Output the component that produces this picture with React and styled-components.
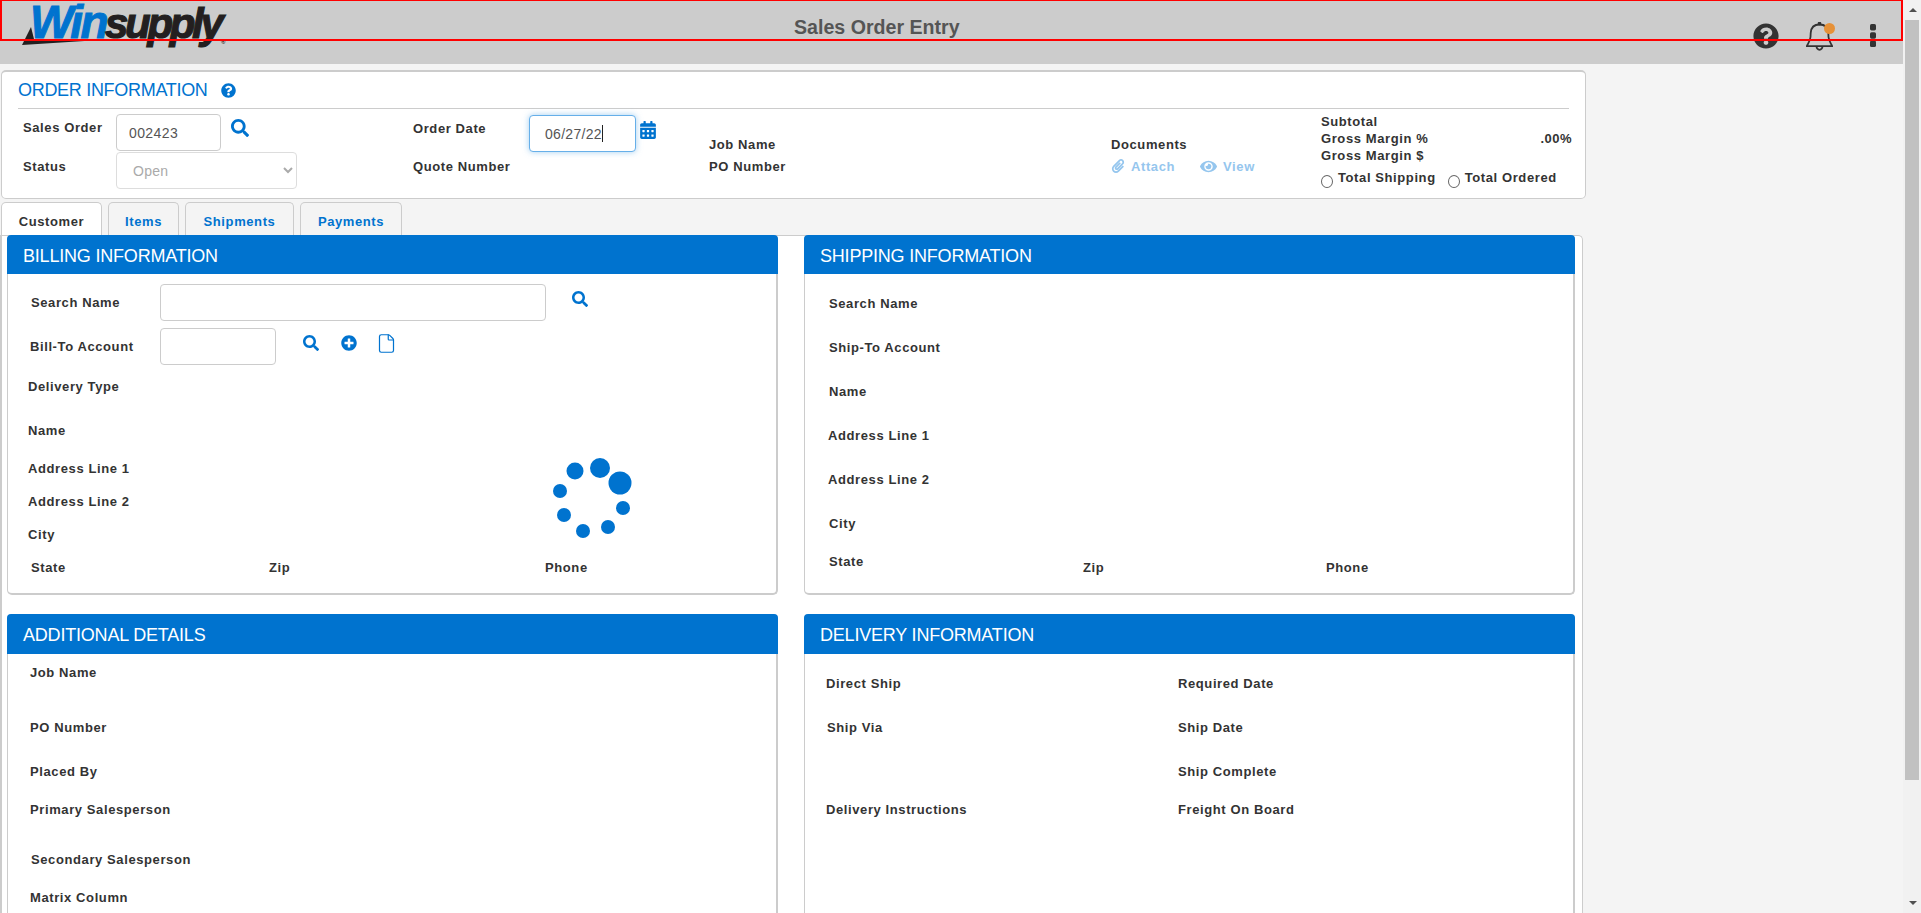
import React from "react";
import styled, { createGlobalStyle } from "styled-components";
import {
  FaQuestionCircle,
  FaSearch,
  FaCalendarAlt,
  FaPlusCircle,
  FaPaperclip,
  FaEye,
} from "react-icons/fa";
import { File } from "lucide-react";

const BLUE = "#0073cf";

const GlobalStyle = createGlobalStyle`
  html, body {
    margin: 0;
    height: 100%;
    overflow: hidden;
    background: #f4f4f4;
    font-family: "Liberation Sans", Arial, sans-serif;
  }
  * { box-sizing: border-box; }
`;

const Page = styled.div`
  display: flex;
  height: 913px;
  overflow: hidden;
`;

const Main = styled.div`
  position: relative;
  flex: 1;
  min-width: 0;
  height: 913px;
  overflow: hidden;
`;

const Scrollbar = styled.div`
  width: 18px;
  background: #f1f1f1;
  display: flex;
  flex-direction: column;
  align-items: center;
  justify-content: space-between;
  position: relative;
  padding: 0 0 8px 1px;
`;

const ArrowUp = styled.div`
  margin-top: 8px;
  width: 0;
  height: 0;
  border-left: 4px solid transparent;
  border-right: 4px solid transparent;
  border-bottom: 4px solid #505050;
`;

const ArrowDown = styled.div`
  width: 0;
  height: 0;
  border-left: 4px solid transparent;
  border-right: 4px solid transparent;
  border-top: 4px solid #505050;
`;

const Thumb = styled.div`
  position: absolute;
  top: 20px;
  left: 2px;
  width: 14px;
  height: 760px;
  background: #c1c1c1;
`;

const Header = styled.header`
  height: 64px;
  background: #ccc;
  display: flex;
  align-items: flex-start;
  position: relative;
`;

const RedFrame = styled.div`
  position: absolute;
  top: 0;
  left: 0;
  right: 0;
  height: 41px;
  border: 2px solid #f00;
  border-top-width: 1px;
  pointer-events: none;
`;

const Logo = styled.div`
  position: relative;
  flex: none;
  width: 225px;
  margin-left: 22px;
  height: 50px;
  font-family: "Liberation Sans", Arial, sans-serif;
  font-style: italic;
  font-weight: 700;
  white-space: nowrap;
`;

const LogoWin = styled.span`
  position: absolute;
  left: 8px;
  top: 2px;
  font-size: 46px;
  line-height: 40px;
  letter-spacing: -2.7px;
  color: ${BLUE};
  -webkit-text-stroke: 1px ${BLUE};
`;

const LogoSupply = styled.span`
  position: absolute;
  left: 83px;
  top: 4px;
  font-size: 42px;
  line-height: 40px;
  letter-spacing: -3.3px;
  color: #231f20;
  -webkit-text-stroke: 1.2px #231f20;
`;

const LogoMark = styled.span`
  position: absolute;
  left: 199px;
  top: 39px;
  font-size: 6px;
  line-height: 6px;
  font-style: normal;
  color: #231f20;
`;

const Swoosh = styled.svg`
  position: absolute;
  left: 0;
  top: 24px;
`;

const PageTitle = styled.h1`
  margin: 17px 0 0 547px;
  font-size: 19.6px;
  line-height: 20px;
  font-weight: 700;
  color: #555;
  white-space: nowrap;
`;

const HeaderIcons = styled.div`
  position: absolute;
  right: 0;
  top: 0;
  height: 64px;
`;

const HelpIcon = styled(FaQuestionCircle)`
  position: absolute;
  right: 124px;
  top: 23px;
  font-size: 26px;
  color: #333;
`;

const Bell = styled.svg`
  position: absolute;
  right: 70px;
  top: 22px;
`;

const BellDot = styled.span`
  position: absolute;
  right: 68px;
  top: 23px;
  width: 11px;
  height: 11px;
  border-radius: 50%;
  background: #e69138;
`;

const More = styled.svg`
  position: absolute;
  right: 27px;
  top: 24px;
`;

const OrderPanel = styled.section`
  margin: 6px 0 0 1px;
  width: 1585px;
  height: 129px;
  background: #fff;
  border: 1px solid #ccc;
  border-top-width: 2px;
  border-radius: 5px;
  padding: 0 16px;
  position: relative;
`;

const OrderHead = styled.div`
  height: 37px;
  border-bottom: 1px solid #ccc;
  display: flex;
  align-items: center;
  gap: 13px;
`;

const OrderTitle = styled.h2`
  margin: 0;
  font-size: 18px;
  font-weight: 400;
  letter-spacing: -0.3px;
  color: ${BLUE};
`;

const OrderBody = styled.div`
  display: grid;
  grid-template-columns: 390px 296px 402px 210px 1fr;
  height: 88px;
  margin: 0 -3px 0 5px;
`;

const OrderCol = styled.div`
  display: flex;
  flex-direction: column;
  padding-top: ${(p) => p.$top || 0}px;
`;

const Inline = styled.div`
  display: flex;
  align-items: center;
  height: ${(p) => p.$h}px;
  margin-top: ${(p) => p.$mt || 0}px;
  gap: ${(p) => p.$gap || 0}px;
`;

const Label = styled.label`
  display: block;
  flex: none;
  width: ${(p) => (p.$w ? `${p.$w}px` : "auto")};
  margin-left: ${(p) => p.$x || 0}px;
  /* items are centred in their row, so a margin moves them by half its size */
  margin-top: ${(p) => Math.max(p.$shift || 0, 0) * 2}px;
  margin-bottom: ${(p) => Math.max(-(p.$shift || 0), 0) * 2}px;
  font-size: 13px;
  font-weight: 700;
  letter-spacing: 0.6px;
  color: #333;
  white-space: nowrap;
`;

const Input = styled.input`
  width: ${(p) => p.$w}px;
  height: 37px;
  padding: 0 12px;
  background: #fff;
  border: 1px solid #ccc;
  border-radius: 4px;
  font: 14px "Liberation Sans", Arial, sans-serif;
  letter-spacing: 0.4px;
  color: #555;
  outline: none;
`;

const DateBox = styled.div`
  width: 107px;
  height: 37px;
  padding: 0 15px;
  display: flex;
  align-items: center;
  background: #fff;
  border: 1px solid #66afe9;
  border-radius: 4px;
  box-shadow: 0 0 6px rgba(102, 175, 233, 0.6);
  font-size: 14px;
  letter-spacing: 0.3px;
  color: #555;
`;

const Caret = styled.span`
  display: inline-block;
  width: 1px;
  height: 17px;
  background: #222;
`;

const StatusSelect = styled.select`
  width: 181px;
  height: 37px;
  padding: 0 12px;
  background: #fff;
  border: 1px solid #ddd;
  border-radius: 4px;
  font: 14px "Liberation Sans", Arial, sans-serif;
  letter-spacing: 0.3px;
  color: #aaa;
  opacity: 1;
`;

const BlueSearch = styled(FaSearch)`
  flex: none;
  font-size: ${(p) => p.$size || 16}px;
  color: ${BLUE};
  margin-left: ${(p) => p.$ml || 0}px;
  margin-top: ${(p) => p.$mt || 0}px;
`;

const Calendar = styled(FaCalendarAlt)`
  flex: none;
  font-size: 18px;
  color: ${BLUE};
  margin: -8px 0 0 3px;
`;

const DocLink = styled.span`
  display: inline-flex;
  align-items: center;
  gap: 6px;
  font-size: 13px;
  font-weight: 700;
  letter-spacing: 0.6px;
  color: #95c6ee;
`;

const SummaryRow = styled.div`
  display: flex;
  justify-content: space-between;
  height: ${(p) => p.$h}px;
  align-items: center;
`;

const SummaryValue = styled.span`
  font-size: 13px;
  font-weight: 700;
  letter-spacing: 0.45px;
  color: #333;
`;

const RadioRow = styled.div`
  display: flex;
  align-items: flex-start;
  margin-top: 6px;
`;

const Radio = styled.span`
  flex: none;
  width: 12px;
  height: 13px;
  margin: 5px 5px 0 0;
  background: #fff;
  border: 1px solid #666;
  border-radius: 50%;
`;

const RadioLabel = styled(Label)`
  margin-right: 12px;
`;

const TabBar = styled.nav`
  display: flex;
  gap: 6px;
  margin: 3px 0 0 1px;
  height: 33px;
`;

const Tab = styled.div`
  width: ${(p) => p.$w}px;
  display: flex;
  align-items: center;
  justify-content: center;
  padding-top: 5px;
  background: ${(p) => (p.$active ? "#fff" : "#f4f4f4")};
  border: 1px solid #ccc;
  border-bottom: 0;
  border-radius: 5px 5px 0 0;
  font-size: 13px;
  font-weight: 700;
  letter-spacing: 0.6px;
  color: ${(p) => (p.$active ? "#333" : BLUE)};
`;

const TabBody = styled.div`
  width: 1583px;
  height: 700px;
  background: #fff;
  border: 1px solid #ccc;
  border-left-width: 2px;
  border-bottom: 0;
  border-radius: 0 5px 0 0;
  padding: 0 0 0 5px;
`;

const PanelGrid = styled.div`
  display: grid;
  grid-template-columns: 771px 771px;
  column-gap: 26px;
  row-gap: 19px;
  margin-top: -1px;
`;

const Panel = styled.section`
  position: relative;
  height: ${(p) => p.$h}px;
  background: #fff;
  border: 1px solid #ccc;
  border-width: 0 2px 2px 1px;
  border-radius: 5px;
`;

const PanelHead = styled.h3`
  margin: 0 -2px 0 -1px;
  height: ${(p) => p.$h}px;
  padding: 3px 16px 0;
  display: flex;
  align-items: center;
  background: ${BLUE};
  border-radius: 4px 4px 0 0;
  font-size: 18px;
  font-weight: 400;
  letter-spacing: -0.2px;
  color: #fff;
`;

const PanelBody = styled.div`
  padding-top: ${(p) => p.$top || 0}px;
`;

const Columns = styled.div`
  display: grid;
  grid-template-columns: ${(p) => p.$cols};
`;

const Row = ({ h = 24, mt = 0, x, label, w, children }) => (
  <Inline $h={h} $mt={mt}>
    <Label $x={x} $w={w}>
      {label}
    </Label>
    {children}
  </Inline>
);

const PlusIcon = styled(FaPlusCircle)`
  flex: none;
  font-size: 16px;
  color: ${BLUE};
  margin: -7px 0 0 22px;
`;

const FileIcon = styled(File)`
  flex: none;
  color: ${BLUE};
  margin: -7px 0 0 19px;
`;

const Spinner = styled.svg`
  position: absolute;
  left: 532px;
  top: 215px;
`;

const DOTS = [
  [60, 18, 10],
  [80, 33, 11.5],
  [35, 21, 8.5],
  [20, 41, 7],
  [24, 65, 7],
  [43, 81, 7],
  [68, 77, 7],
  [83, 58, 7],
];

export default function App() {
  return (
    <Page>
      <GlobalStyle />
      <Main>
        <Header>
          <Logo>
            <Swoosh width="100" height="26" viewBox="0 0 100 26">
              <path d="M9 3 L0 21 L78 16 L12 15 Z" fill="#231f20" />
            </Swoosh>
            <LogoWin>Win</LogoWin>
            <LogoSupply>supply</LogoSupply>
            <LogoMark>®</LogoMark>
          </Logo>
          <PageTitle>Sales Order Entry</PageTitle>
          <HeaderIcons>
            <HelpIcon />
            <Bell width="27" height="29" viewBox="0 0 27 29" fill="none" stroke="#333" strokeWidth="1.8">
              <circle cx="13.5" cy="1.6" r="1" fill="#333" />
              <path d="M13.5 2.5 C8 2.5 5 6 4.7 11 L4.5 15 C4.2 19 2 21.5 .8 24.2 H26.2 C25 21.5 22.8 19 22.5 15 L22.3 11 C22 6 19 2.5 13.5 2.5 Z" />
              <path d="M10.5 24.2 a3 3.6 0 0 0 6 0" />
            </Bell>
            <BellDot />
            <More width="6" height="23" viewBox="0 0 6 23" fill="#333">
              <rect width="6" height="6.4" rx="1.6" />
              <rect y="8.3" width="6" height="6.4" rx="1.6" />
              <rect y="16.6" width="6" height="6.4" rx="1.6" />
            </More>
          </HeaderIcons>
        </Header>
        <RedFrame />

        <OrderPanel>
          <OrderHead>
            <OrderTitle>ORDER INFORMATION</OrderTitle>
            <FaQuestionCircle size={15} color={BLUE} />
          </OrderHead>
          <OrderBody>
            <OrderCol $top={5}>
              <Inline $h={37}>
                <Label $w={93} $shift={-5}>
                  Sales Order
                </Label>
                <Input defaultValue="002423" $w={105} />
                <BlueSearch $ml={10} $mt={-10} $size={18} />
              </Inline>
              <Inline $h={37} $mt={1}>
                <Label $w={93} $shift={-4}>
                  Status
                </Label>
                <StatusSelect disabled defaultValue="Open">
                  <option>Open</option>
                </StatusSelect>
              </Inline>
            </OrderCol>
            <OrderCol $top={6}>
              <Inline $h={37}>
                <Label $w={116} $shift={-5}>
                  Order Date
                </Label>
                <DateBox>
                  06/27/22
                  <Caret />
                </DateBox>
                <Calendar />
              </Inline>
              <Inline $h={27} $mt={4}>
                <Label $shift={-3}>Quote Number</Label>
              </Inline>
            </OrderCol>
            <OrderCol $top={24}>
              <Inline $h={22}>
                <Label>Job Name</Label>
              </Inline>
              <Inline $h={22}>
                <Label>PO Number</Label>
              </Inline>
            </OrderCol>
            <OrderCol $top={24}>
              <Inline $h={22}>
                <Label>Documents</Label>
              </Inline>
              <Inline $h={22} $gap={25}>
                <DocLink>
                  <FaPaperclip size={14} />
                  Attach
                </DocLink>
                <DocLink>
                  <FaEye size={17} />
                  View
                </DocLink>
              </Inline>
            </OrderCol>
            <OrderCol $top={4}>
              <SummaryRow $h={17}>
                <Label>Subtotal</Label>
              </SummaryRow>
              <SummaryRow $h={17}>
                <Label>Gross Margin %</Label>
                <SummaryValue>.00%</SummaryValue>
              </SummaryRow>
              <SummaryRow $h={17}>
                <Label>Gross Margin $</Label>
              </SummaryRow>
              <RadioRow>
                <Radio />
                <RadioLabel>Total Shipping</RadioLabel>
                <Radio />
                <Label>Total Ordered</Label>
              </RadioRow>
            </OrderCol>
          </OrderBody>
        </OrderPanel>

        <TabBar>
          <Tab $w={101} $active>
            Customer
          </Tab>
          <Tab $w={71}>Items</Tab>
          <Tab $w={109}>Shipments</Tab>
          <Tab $w={102}>Payments</Tab>
        </TabBar>

        <TabBody>
          <PanelGrid>
            <Panel $h={360}>
              <PanelHead $h={39}>BILLING INFORMATION</PanelHead>
              <PanelBody $top={10}>
                <Row h={37} x={23} w={129} label="Search Name">
                  <Input $w={386} />
                  <BlueSearch $ml={26} $mt={-7} />
                </Row>
                <Row h={37} mt={7} x={22} w={130} label="Bill-To Account">
                  <Input $w={116} />
                  <BlueSearch $ml={27} $mt={-7} />
                  <PlusIcon />
                  <FileIcon size={21} strokeWidth={1.4} />
                </Row>
                <Row mt={9} x={20} label="Delivery Type" />
                <Row mt={20} x={20} label="Name" />
                <Row mt={14} x={20} label="Address Line 1" />
                <Row mt={9} x={20} label="Address Line 2" />
                <Row mt={9} x={20} label="City" />
                <Row mt={9} x={23} w={238} label="State">
                  <Label $w={276}>Zip</Label>
                  <Label>Phone</Label>
                </Row>
              </PanelBody>
              <Spinner width="100" height="100" viewBox="0 0 100 100">
                {DOTS.map(([cx, cy, r]) => (
                  <circle key={cx} cx={cx} cy={cy} r={r} fill={BLUE} />
                ))}
              </Spinner>
            </Panel>

            <Panel $h={360}>
              <PanelHead $h={39}>SHIPPING INFORMATION</PanelHead>
              <PanelBody $top={17}>
                <Row mt={0} x={24} label="Search Name" />
                <Row mt={20} x={24} label="Ship-To Account" />
                <Row mt={20} x={24} label="Name" />
                <Row mt={20} x={23} label="Address Line 1" />
                <Row mt={20} x={23} label="Address Line 2" />
                <Row mt={20} x={24} label="City" />
                <Row mt={14} x={24} w={254} label="State">
                  <Label $w={243} $shift={6}>
                    Zip
                  </Label>
                  <Label $shift={6}>Phone</Label>
                </Row>
              </PanelBody>
            </Panel>

            <Panel $h={400}>
              <PanelHead $h={40}>ADDITIONAL DETAILS</PanelHead>
              <PanelBody $top={6}>
                <Row x={22} label="Job Name" />
                <Row mt={31} x={22} label="PO Number" />
                <Row mt={20} x={22} label="Placed By" />
                <Row mt={14} x={22} label="Primary Salesperson" />
                <Row mt={26} x={23} label="Secondary Salesperson" />
                <Row mt={14} x={22} label="Matrix Column" />
              </PanelBody>
            </Panel>

            <Panel $h={400}>
              <PanelHead $h={40}>DELIVERY INFORMATION</PanelHead>
              <PanelBody $top={17}>
                <Columns $cols="373px 1fr">
                  <div>
                    <Row x={21} label="Direct Ship" />
                    <Row mt={20} x={22} label="Ship Via" />
                    <Row mt={58} x={21} label="Delivery Instructions" />
                  </div>
                  <div>
                    <Row x={0} label="Required Date" />
                    <Row mt={20} x={0} label="Ship Date" />
                    <Row mt={20} x={0} label="Ship Complete" />
                    <Row mt={14} x={0} label="Freight On Board" />
                  </div>
                </Columns>
              </PanelBody>
            </Panel>
          </PanelGrid>
        </TabBody>
      </Main>
      <Scrollbar>
        <ArrowUp />
        <Thumb />
        <ArrowDown />
      </Scrollbar>
    </Page>
  );
}
